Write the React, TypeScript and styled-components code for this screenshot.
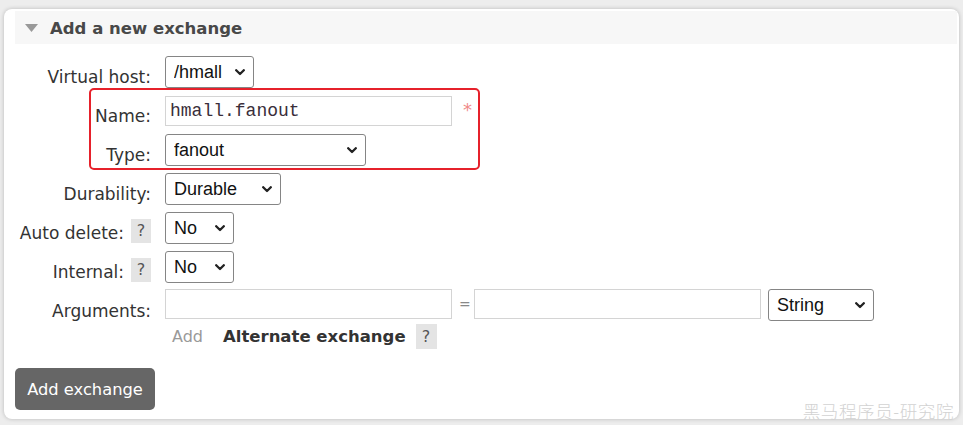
import React from "react";
import styled, { createGlobalStyle } from "styled-components";

const Global = createGlobalStyle`
  html, body { margin: 0; padding: 0; }
  body {
    background: #ededed;
    font-family: "DejaVu Sans", Verdana, sans-serif;
    width: 963px;
    height: 425px;
    overflow: hidden;
  }
`;

const Page = styled.div`
  padding: 9px 4px 6px 4px;
  box-sizing: border-box;
  height: 425px;
`;

const Card = styled.div`
  position: relative;
  background: #fff;
  border-radius: 8px;
  box-shadow: 0 0 4px rgba(0, 0, 0, 0.22);
  height: 410px;
  padding: 2px 2px 0 11px;
  box-sizing: border-box;
`;

const Header = styled.div`
  display: flex;
  align-items: center;
  gap: 12px;
  height: 33px;
  background: #f7f7f7;
  padding-left: 10px;
`;

const Title = styled.h2`
  margin: 0;
  font-size: 16.5px;
  font-weight: bold;
  color: #484848;
  padding-top: 1px;
`;

const Form = styled.div`
  position: relative;
  display: grid;
  grid-template-columns: 136px auto;
  column-gap: 14px;
  row-gap: 7px;
  margin-top: 12px;
  justify-content: start;
`;

const Label = styled.div`
  display: flex;
  justify-content: flex-end;
  align-items: flex-start;
  gap: 7px;
  font-size: 17px;
  line-height: 24px;
  color: #333;
  height: 32px;
  box-sizing: border-box;
`;

const LabelText = styled.span`
  padding-top: 9px;
`;

const Help = styled.span`
  display: inline-flex;
  align-items: center;
  justify-content: center;
  width: 20px;
  height: 24px;
  margin-top: 7px;
  background: #e4e4e4;
  color: #555;
  font-size: 16px;
`;

const Cell = styled.div<{ $top?: boolean }>`
  display: flex;
  align-items: ${(p) => (p.$top ? "flex-start" : "center")};
  gap: 7px;
  height: 32px;
  margin-top: ${(p) => (p.$top ? "-1px" : "0")};
`;

const SelectWrap = styled.div`
  position: relative;
  display: inline-flex;
`;

const Select = styled.select<{ $w: number }>`
  appearance: none;
  -webkit-appearance: none;
  width: ${(p) => p.$w}px;
  height: 32px;
  font-family: "Liberation Sans", Arial, sans-serif;
  font-size: 18px;
  color: #111;
  background: #fff;
  border: 1px solid #858585;
  border-radius: 3px;
  padding: 0 24px 0 8px;
  box-sizing: border-box;
  outline: none;
`;

const Chevron = styled.svg`
  position: absolute;
  right: 9px;
  top: 50%;
  margin-top: -3px;
  pointer-events: none;
`;

const Input = styled.input<{ $mono?: boolean }>`
  width: 287px;
  height: 30px;
  border: 1px solid #d4d4d4;
  box-sizing: border-box;
  padding: 0 4px;
  font-family: ${(p) => (p.$mono ? `"Liberation Mono", "Courier New", monospace` : `"Liberation Sans", Arial, sans-serif`)};
  font-size: 18px;
  color: #3a2e3a;
  background: #fff;
  outline: none;
`;

const Required = styled.span`
  color: #f08a8a;
  font-size: 18px;
  align-self: flex-start;
  margin-left: 4px;
  margin-top: 4px;
`;

const Equals = styled.span`
  width: 9px;
  font-size: 14px;
  line-height: 30px;
  text-align: center;
  color: #888;
  margin-right: -1px;
`;

const AddRow = styled.div`
  grid-column: 2;
  display: flex;
  align-items: center;
  gap: 20px;
  padding-left: 7px;
  margin-top: -5px;
  height: 25px;
`;

const AddLink = styled.span`
  color: #999;
  font-size: 16px;
`;

const AltLabel = styled.span`
  display: flex;
  align-items: center;
  gap: 10px;
  font-size: 16.5px;
  font-weight: bold;
  color: #333;
`;

const AltHelp = styled(Help)`
  margin-top: 0;
  width: 21px;
  height: 25px;
  font-weight: normal;
`;

const Button = styled.button`
  margin-top: 19px;
  width: 140px;
  height: 42px;
  background: #666;
  color: #fff;
  border: none;
  border-radius: 5px;
  font-family: "DejaVu Sans", Verdana, sans-serif;
  font-size: 16.3px;
  padding: 0;
`;

const Highlight = styled.div`
  position: absolute;
  left: 74px;
  top: 32px;
  width: 391px;
  height: 82px;
  border: 2px solid #e6212b;
  border-radius: 5px;
  box-sizing: border-box;
  pointer-events: none;
`;

const Watermark = styled.div`
  position: absolute;
  right: 5px;
  bottom: -4px;
  font-family: "Noto Sans CJK SC", sans-serif;
  font-weight: 300;
  font-size: 17.5px;
  color: #d2d2d2;
  letter-spacing: 0.6px;
`;

const Triangle = () => (
  <svg width="13" height="8" viewBox="0 0 13 8">
    <path d="M0 0 H13 L6.5 8 Z" fill="#999" />
  </svg>
);

const Dropdown = ({ w, value }: { w: number; value: string }) => (
  <SelectWrap>
    <Select $w={w} defaultValue={value}>
      <option>{value}</option>
    </Select>
    <Chevron width="10" height="7" viewBox="0 0 10 7">
      <path d="M1.2 1.2 L5 5 L8.8 1.2" fill="none" stroke="#222" strokeWidth="2.3" strokeLinecap="round" strokeLinejoin="round" />
    </Chevron>
  </SelectWrap>
);

export default function App() {
  return (
    <>
      <Global />
      <Page>
        <Card>
          <Header>
            <Triangle />
            <Title>Add a new exchange</Title>
          </Header>
          <Form>
            <Label><LabelText>Virtual host:</LabelText></Label>
            <Cell>
              <Dropdown w={89} value="/hmall" />
            </Cell>

            <Label><LabelText>Name:</LabelText></Label>
            <Cell>
              <Input $mono defaultValue="hmall.fanout" />
              <Required>*</Required>
            </Cell>

            <Label><LabelText>Type:</LabelText></Label>
            <Cell>
              <Dropdown w={201} value="fanout" />
            </Cell>

            <Label><LabelText>Durability:</LabelText></Label>
            <Cell>
              <Dropdown w={116} value="Durable" />
            </Cell>

            <Label><LabelText>Auto delete:</LabelText><Help>?</Help></Label>
            <Cell>
              <Dropdown w={69} value="No" />
            </Cell>

            <Label><LabelText>Internal:</LabelText><Help>?</Help></Label>
            <Cell>
              <Dropdown w={69} value="No" />
            </Cell>

            <Label><LabelText>Arguments:</LabelText></Label>
            <Cell $top>
              <Input />
              <Equals>=</Equals>
              <Input />
              <Dropdown w={106} value="String" />
            </Cell>

            <AddRow>
              <AddLink>Add</AddLink>
              <AltLabel>Alternate exchange <AltHelp>?</AltHelp></AltLabel>
            </AddRow>

            <Highlight />
          </Form>
          <Button>Add exchange</Button>
          <Watermark>黑马程序员-研究院</Watermark>
        </Card>
      </Page>
    </>
  );
}
